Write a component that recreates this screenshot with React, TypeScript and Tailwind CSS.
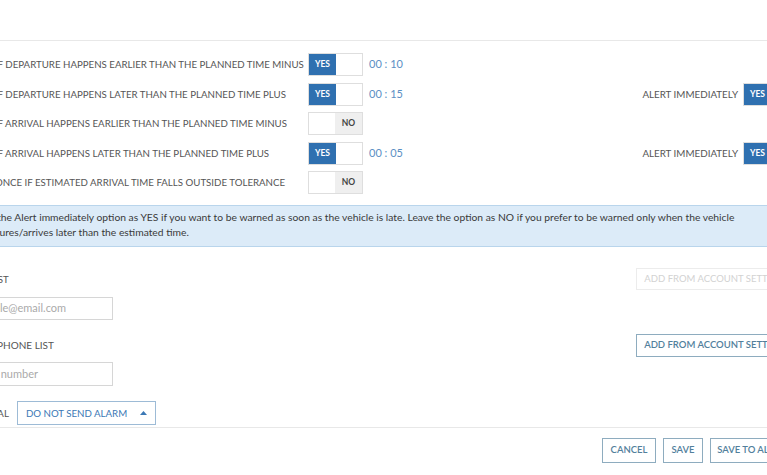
import React from "react";

function Toggle({ on }: { on: boolean }) {
  return (
    <div className="flex h-[23px] w-[55px] shrink-0 border border-[#dedede] bg-white">
      {on ? (
        <>
          <div className="flex w-[27px] items-center justify-center bg-[#2f70b0] text-[8.5px] font-bold text-white">YES</div>
          <div className="flex-1" />
        </>
      ) : (
        <>
          <div className="flex-1" />
          <div className="flex w-[27px] items-center justify-center bg-[#efefef] text-[8.5px] font-bold text-[#444]">NO</div>
        </>
      )}
    </div>
  );
}

const rows = [
  { label: "ALERT IF DEPARTURE HAPPENS EARLIER THAN THE PLANNED TIME MINUS", on: true, time: "00 : 10", imm: false },
  { label: "ALERT IF DEPARTURE HAPPENS LATER THAN THE PLANNED TIME PLUS", on: true, time: "00 : 15", imm: true },
  { label: "ALERT IF ARRIVAL HAPPENS EARLIER THAN THE PLANNED TIME MINUS", on: false, time: "", imm: false },
  { label: "ALERT IF ARRIVAL HAPPENS LATER THAN THE PLANNED TIME PLUS", on: true, time: "00 : 05", imm: true },
  { label: "ALERT ONCE IF ESTIMATED ARRIVAL TIME FALLS OUTSIDE TOLERANCE", on: false, time: "", imm: false },
];

export default function App() {
  return (
    <div className="h-[475px] w-[767px] overflow-hidden bg-white font-['Lato','Noto_Sans',sans-serif] text-[#555]">
      <div className="h-[41px] w-[834px] border-b border-[#e8e8e8]" />
      <div className="ml-[-36px] w-[834px]">
        <div className="flex flex-col gap-[6.5px] pt-[12px]">
          {rows.map((r, i) => (
            <div key={i} className="flex h-[23px] items-center">
              <div className="w-[344px] shrink-0 whitespace-nowrap text-[9.7px] text-[#555]">{r.label}</div>
              <Toggle on={r.on} />
              <div className="ml-[6px] text-[11px] text-[#5b8fc4]">{r.time}</div>
              {r.imm && (
                <div className="ml-auto flex items-center gap-[5px]">
                  <span className="text-[9.8px] text-[#555]">ALERT IMMEDIATELY</span>
                  <Toggle on={true} />
                </div>
              )}
            </div>
          ))}
        </div>

        <div className="mt-[11px] border-y border-[#b9d5ec] bg-[#dcebf8] px-[6px] pb-[6px] pt-[4px] text-[10.3px] leading-[15px] text-[#3a3a3a]">
          <div className="ml-[-3px] whitespace-nowrap">Select the Alert immediately option as YES if you want to be warned as soon as the vehicle is late. Leave the option as NO if you prefer to be warned only when the vehicle</div>
          <div className="whitespace-nowrap">departures/arrives later than the estimated time.</div>
        </div>

        <div className="mt-[21px] flex h-[22px] items-center justify-between">
          <span className="ml-[-5px] text-[9.7px] text-[#555]">EMAIL LIST</span>
          <button className="h-[22px] w-[162px] border border-[#ececec] text-[9.5px] text-[#d2d2d2]">ADD FROM ACCOUNT SETTINGS</button>
        </div>
        <div className="mt-[7px] flex h-[23px] w-[149px] items-center border border-[#d6d6d6] pl-[3px] text-[11px] text-[#aaa]">
          example@email.com
        </div>

        <div className="mt-[14px] flex h-[23px] items-center justify-between">
          <span className="ml-[-7px] text-[10px] text-[#555]">MOBILE PHONE LIST</span>
          <button className="h-[23px] w-[162px] border border-[#8eacbf] text-[9.5px] font-semibold text-[#52809c]">ADD FROM ACCOUNT SETTINGS</button>
        </div>
        <div className="mt-[5px] flex h-[24px] w-[149px] items-center border border-[#d6d6d6] pl-[2px] text-[11px] text-[#aaa]">
          Phone number
        </div>

        <div className="mt-[15px] flex h-[24px] items-center gap-[8px]">
          <span className="text-[9.7px] text-[#555]">INTERVAL</span>
          <div className="flex h-[24px] w-[139px] items-center justify-between border border-[#9dbbd6] pl-[8px] pr-[8px] text-[9.7px] text-[#3b78b5]">
            <span>DO NOT SEND ALARM</span>
            <svg width="7" height="4" viewBox="0 0 7 4"><path d="M0 4 L3.5 0 L7 4 Z" fill="#3b78b5" /></svg>
          </div>
        </div>
      </div>
      <div className="mt-[2px] w-[834px] border-t border-[#e8e8e8]" />
      <div className="ml-[-36px] mt-[10px] flex w-[834px] justify-end gap-[7px]">
        <button className="h-[25px] w-[54px] border border-[#8eacbf] text-[9.5px] font-semibold text-[#52809c]">CANCEL</button>
        <button className="h-[25px] w-[40px] border border-[#8eacbf] text-[9.5px] font-semibold text-[#52809c]">SAVE</button>
        <button className="h-[25px] w-[88px] border border-[#8eacbf] text-[9.5px] font-semibold text-[#52809c]">SAVE TO ALERTS</button>
      </div>
    </div>
  );
}
